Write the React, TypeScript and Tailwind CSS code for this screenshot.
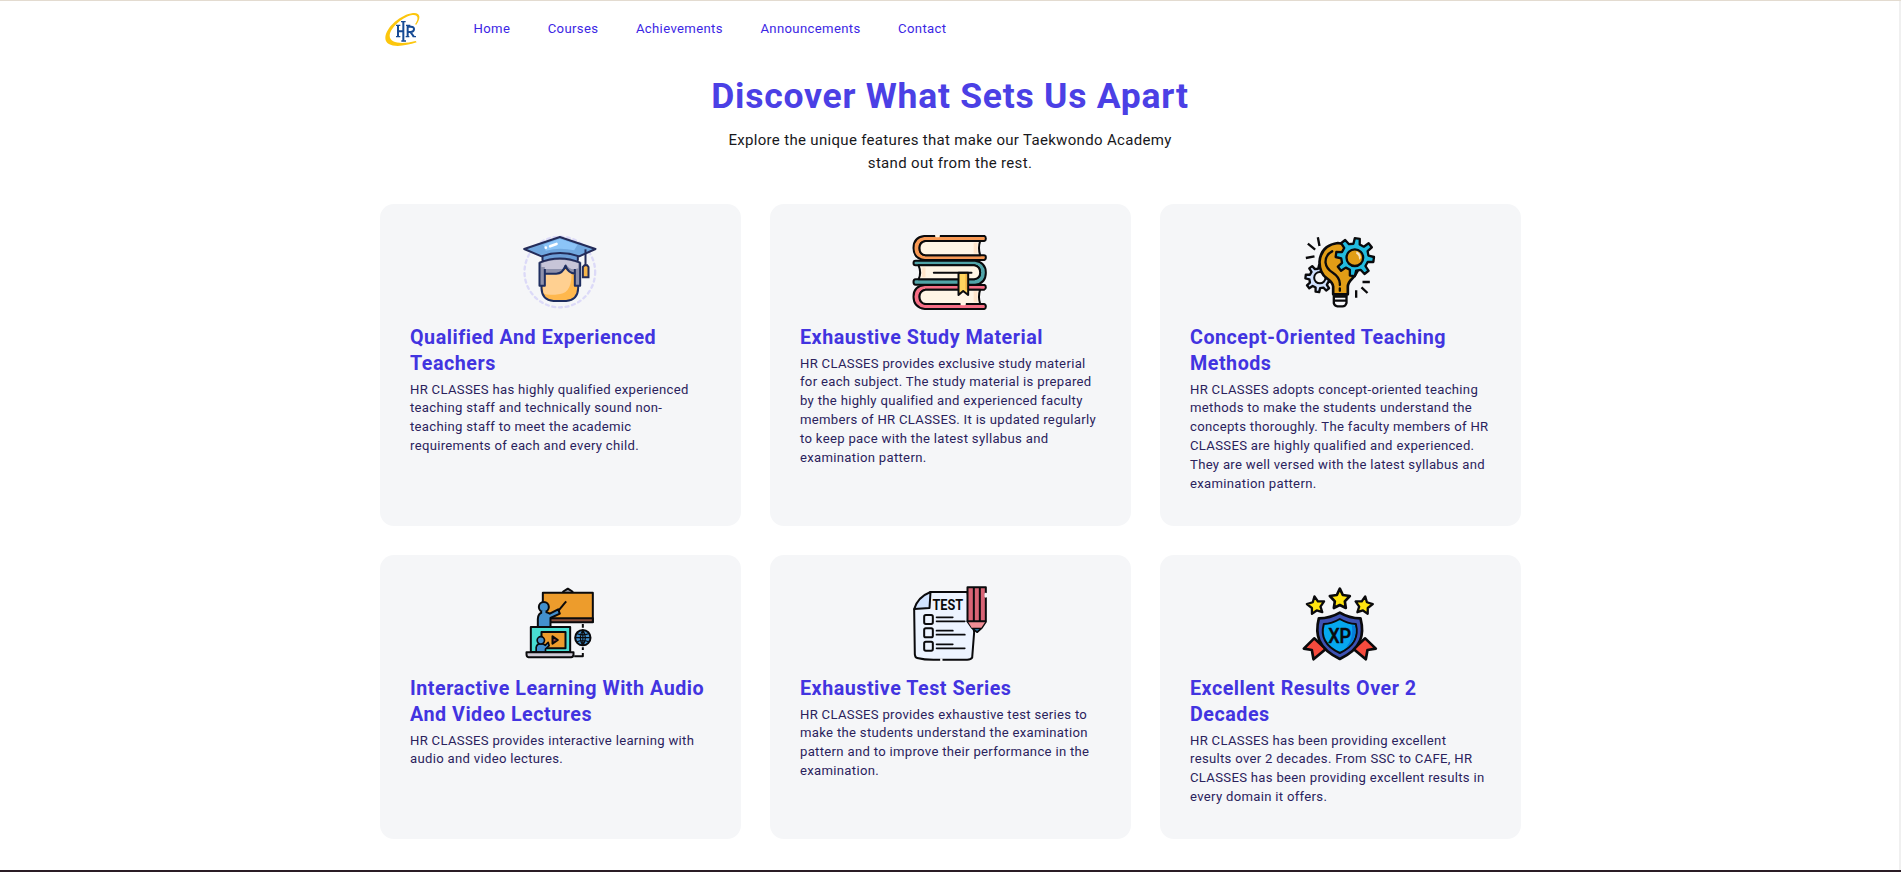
import type { ReactNode } from "react";

const INK = "#0a0a0c";

function Logo() {
  return (
    <svg viewBox="0 0 150 135" className="h-[45px] w-[50px]" fill="none">
      <path d="M115 59C130 38 127 22 105 24C70 28 23 66 22 99C22 129 72 127 116 112L113 108C74 118 35 116 35 92C37 66 78 33 104 30C121 28 123 42 111 58Z" fill="#fcc60d" />
      <g stroke="#164a94" strokeWidth="6">
        <path d="M60 63V95M76 51V107M89 63V95M60 79H76M89 65H99Q109 66 108 73Q107 80 98 81H89M97 81L107 94" />
        <path d="M54 61H67M54 95H67M69 50H83M70 108H84M84 61H97M83 95H94M104 95H114" strokeWidth="4" />
      </g>
    </svg>
  );
}

function Teacher() {
  return (
    <>
      <circle cx="149" cy="141" r="106" stroke="#dcdaf8" strokeWidth="7" strokeDasharray="9 11" strokeLinecap="round" />
      <path d="M94 130V190Q95 225 130 228H168Q203 225 204 190V130Z" fill="#ffb84d" />
      <path d="M99 135V205Q112 213 150 207Q187 203 184 135Z" fill="#ffd091" />
      <path d="M94 175V190Q95 225 130 228H168Q203 225 204 190V175" stroke="#1e2e60" strokeWidth="6" />
      <path d="M88 112Q149 90 210 112V182H195V146Q177 148 166 126Q158 146 139 146H104V182H88Z" fill="#8e91ab" />
      <path d="M94 114Q149 94 204 114V130Q180 140 167 116L157 132H104V126H94Z" fill="#c7c5d8" />
      <path d="M88 112V182H104V132M194 132V182H210V112M104 146H138Q158 146 166 122Q174 145 195 146" stroke="#1e2e60" strokeWidth="6" strokeLinejoin="round" />
      <path d="M97 90V109Q149 90 203 109V90L149 74Z" fill="#6d9ed7" />
      <path d="M88 113Q149 88 210 113M97 90V107M203 90V107" stroke="#242c59" strokeWidth="6" />
      <path d="M42 72L149 36L256 72L207 94Q149 74 94 94Z" fill="#71a8df" stroke="#242c59" strokeWidth="6" strokeLinejoin="round" />
      <path d="M99 59L149 41L202 59L192 76Q149 66 107 77Z" fill="#8cc4f7" />
      <path d="M120 64L139 57" stroke="#fff" strokeWidth="8" strokeLinecap="round" />
      <circle cx="107" cy="68" r="4" fill="#fff" />
      <path d="M226 73V123" stroke="#242c59" strokeWidth="6" />
      <path d="M218 126L223 121H231L235 126V157H218Z" fill="#f6b64b" stroke="#242c59" strokeWidth="6" />
    </>
  );
}

function Books() {
  return (
    <g stroke={INK} strokeWidth="6" strokeLinejoin="round" strokeLinecap="round">
      <path d="M72 33H253Q257 34 257 41Q257 47 252 48H76Q58 51 58 69Q58 89 76 91H252Q257 91 257 97Q257 104 252 105H74Q40 101 40 69Q40 37 72 33Z" fill="#f99a55" />
      <path d="M76 48H240Q233 69 240 91H76Q58 89 58 69Q58 51 76 48Z" fill="#fff5e5" />
      <path d="M74 180H253Q257 181 257 187Q257 193 252 194H76Q58 198 58 215Q58 234 76 237H252Q257 238 257 245Q257 251 252 252H74Q40 247 40 215Q40 183 74 180Z" fill="#f66f86" />
      <path d="M76 194H240Q233 215 240 237H76Q58 234 58 215Q58 198 76 194Z" fill="#fff5e5" />
      <path d="M46 107H225Q257 112 257 143Q257 175 225 179H46Q40 179 40 171Q40 163 46 163H222Q240 159 240 143Q240 124 222 121H46Q40 121 40 114Q40 107 46 107Z" fill="#50a4a8" />
      <path d="M55 121H222Q240 124 240 143Q240 159 222 163H55Q65 143 55 121Z" fill="#fff5e5" />
      <path d="M226 53V86M226 199V232" stroke="#ffe5ca" strokeWidth="11" strokeLinecap="butt" />
      <path d="M71 127V157" stroke="#ffe5ca" strokeWidth="10" strokeLinecap="butt" />
      <path d="M175 143V210L189 198L204 210V143Z" fill="#ffd45f" />
      <path d="M198 147V193" stroke="#efaa3d" strokeWidth="4" />
      <path d="M101 143H214" strokeWidth="6" />
      <path d="M108 33H116M184 237H194" stroke="#fff5e5" strokeWidth="7" />
    </g>
  );
}

function Gear({ cx, cy, scale, fill }: { cx: number; cy: number; scale: number; fill: string }) {
  return (
    <path
      transform={`translate(${cx} ${cy}) scale(${scale}) rotate(7)`}
      d="M-9-39L-7-56H8L10-39L23-34L36-46L47-35L36-22L40-9L57-7V8L40 10L35 23L46 36L35 47L22 36L9 40L7 57H-8L-10 40L-23 35L-36 46L-47 35L-36 22L-40 9L-57 7V-8L-40-10L-35-23L-46-36L-35-47L-22-36Z"
      fill={fill}
      stroke={INK}
      strokeWidth={7 / scale}
      strokeLinejoin="round"
    />
  );
}

function Idea() {
  return (
    <>
      <Gear cx={87} cy={160} scale={0.72} fill="#d0e1ff" />
      <circle cx="89" cy="158" r="17" fill="#f5f6f8" stroke={INK} strokeWidth="6" />
      <path d="M129 208V185Q128 173 111 161Q88 145 88 111Q92 61 143 54Q205 61 207 113Q207 140 185 162Q173 173 173 186V208Z" fill="#e29d16" stroke={INK} strokeWidth="8" strokeLinejoin="round" />
      <path d="M126 79Q106 89 106 112Q108 131 128 143Q151 158 149 180M149 190V197" stroke={INK} strokeWidth="7" strokeLinecap="round" />
      <path d="M131 214H169V234Q166 244 157 244H142Q133 243 131 235Z" fill="#f8f8fb" stroke={INK} strokeWidth="7" />
      <path d="M129 214H171M131 227H169" stroke={INK} strokeWidth="7" />
      <Gear cx={194} cy={96} scale={1} fill="#22bcdf" />
      <circle cx="194" cy="98" r="25" fill="#e29d16" stroke={INK} strokeWidth="7" />
      <path d="M199 79Q212 84 212 99L207 105Q208 91 198 86Z" fill="#f7e3c2" />
      <path d="M83 37L88 63M53 56L75 74M47 99L73 94M217 171H239M214 187L232 204M198 196V218" stroke={INK} strokeWidth="7" />
    </>
  );
}

function Lecture() {
  return (
    <g stroke={INK} strokeWidth="6" strokeLinejoin="round">
      <path d="M157 42L173 32L189 42" fill="#9a9aa2" />
      <path d="M98 44H248V132H98Z" fill="#ed9c2c" />
      <path d="M98 121H248V133H98Z" fill="#8d513c" />
      <path d="M83 147V123Q84 106 97 103L103 101Q113 104 119 107L144 94L149 107L121 120V147Z" fill="#4390cd" />
      <circle cx="101" cy="87" r="15" fill="#4390cd" />
      <path d="M96 99H106V112H96Z" fill="#4390cd" stroke="none" />
      <path d="M145 98L168 70" />
      <path d="M62 147H180V222H62Z" fill="#48ddd1" strokeWidth="6" />
      <path d="M94 162H166V211H94Z" fill="#ed9c2c" />
      <path d="M78 222V208Q80 197 93 197Q102 198 105 202L114 193L117 203L106 213V222Z" fill="#4390cd" strokeWidth="5" />
      <circle cx="92" cy="187" r="11" fill="#4390cd" strokeWidth="5" />
      <path d="M127 175L143 186L127 197Z" fill="#a4473c" />
      <path d="M49 223H190V230Q189 238 183 238H55Q49 237 49 229Z" fill="#cecad5" />
      <circle cx="218" cy="179" r="23" fill="#4390cd" />
      <path d="M218 156Q203 179 218 202Q233 179 218 156V202M195 179H241M201 167Q218 174 235 167M201 191Q218 184 235 191" strokeWidth="3.5" />
      <path d="M218 138V149M218 208V216M218 225V235H192" />
    </g>
  );
}

function Test() {
  return (
    <g stroke={INK} strokeWidth="6" strokeLinecap="round" strokeLinejoin="round">
      <path d="M91 42H202L222 162L216 239Q212 245 201 245H116Q78 247 51 240Q45 239 44 229L42 94Z" fill="#edf4ff" />
      <path d="M120 245H127" stroke="#f5f6f8" strokeWidth="8" strokeLinecap="butt" />
      <path d="M42 93Q53 57 91 42L88 90Z" fill="#d1e3ff" />
      <rect x="72" y="111" width="26" height="27" rx="5" />
      <rect x="72" y="151" width="26" height="27" rx="5" />
      <rect x="72" y="191" width="26" height="27" rx="5" />
      <path d="M109 118H158M109 130H194M109 158H158M109 170H194M109 199H158M109 211H194" strokeWidth="5" />
      <path d="M202 28H257V131L245 149L231 162L215 149L202 130Z" fill="#d86475" />
      <path d="M204 132H255L243 150H215Z" fill="#f18d94" stroke="none" />
      <path d="M202 130H255M221 30V129M239 30V129" />
      <path d="M217 151H243L231 162Z" fill="#276a92" strokeWidth="4" />
      <path d="M257 48V55" stroke="#f5f6f8" strokeWidth="8" />
      <text x="97" y="96" textLength="92" lengthAdjust="spacingAndGlyphs" fill={INK} stroke="none" fontFamily="Roboto, sans-serif" fontWeight="700" fontSize="45">TEST</text>
    </g>
  );
}

const STAR = "M0-30L9-11L30-8L15 8L18 28L0 19L-18 28L-15 8L-30-8L-9-11Z";

function Results() {
  return (
    <g stroke={INK} strokeWidth="8" strokeLinejoin="round">
      <path d="M72 181L41 212L65 216L70 244L107 213Z" fill="#f64b3d" />
      <path d="M225 181L257 212L232 216L227 244L190 213Z" fill="#f64b3d" />
      <path d="M149 104Q177 121 211 121C223 168 216 211 149 243C82 211 74 168 86 121Q120 121 149 104Z" fill="#3d52b3" />
      <path d="M149 123Q173 137 197 138C205 170 197 203 149 225C101 203 92 170 101 138Q125 137 149 123Z" fill="#06a8ef" strokeWidth="6" />
      <path d="M185 141L194 143C200 169 191 195 166 211Q192 181 185 141Z" fill="#087cdb" stroke="none" />
      <path d={STAR} transform="translate(149 62)" fill="#ffe410" />
      <path d={STAR} transform="translate(77 81) rotate(-9) scale(.87)" fill="#ffe410" />
      <path d={STAR} transform="translate(221 81) rotate(9) scale(.87)" fill="#ffe410" />
      <text x="114" y="194" textLength="69" lengthAdjust="spacingAndGlyphs" fill={INK} stroke={INK} strokeWidth="1.5" fontFamily="Roboto, sans-serif" fontWeight="500" fontSize="59">XP</text>
    </g>
  );
}

type Feature = { icon: ReactNode; box: string; title: string[]; body: string[] };

const TOP = "38.5 27 225 225";
const BOTTOM = "38.5 21 225 225";

const features: Feature[] = [
  { icon: <Teacher />, box: TOP, title: ["Qualified And Experienced", "Teachers"], body: ["HR CLASSES has highly qualified experienced", "teaching staff and technically sound non-", "teaching staff to meet the academic", "requirements of each and every child."] },
  { icon: <Books />, box: TOP, title: ["Exhaustive Study Material"], body: ["HR CLASSES provides exclusive study material", "for each subject. The study material is prepared", "by the highly qualified and experienced faculty", "members of HR CLASSES. It is updated regularly", "to keep pace with the latest syllabus and", "examination pattern."] },
  { icon: <Idea />, box: TOP, title: ["Concept-Oriented Teaching", "Methods"], body: ["HR CLASSES adopts concept-oriented teaching", "methods to make the students understand the", "concepts thoroughly. The faculty members of HR", "CLASSES are highly qualified and experienced.", "They are well versed with the latest syllabus and", "examination pattern."] },
  { icon: <Lecture />, box: BOTTOM, title: ["Interactive Learning With Audio", "And Video Lectures"], body: ["HR CLASSES provides interactive learning with", "audio and video lectures."] },
  { icon: <Test />, box: BOTTOM, title: ["Exhaustive Test Series"], body: ["HR CLASSES provides exhaustive test series to", "make the students understand the examination", "pattern and to improve their performance in the", "examination."] },
  { icon: <Results />, box: BOTTOM, title: ["Excellent Results Over 2", "Decades"], body: ["HR CLASSES has been providing excellent", "results over 2 decades. From SSC to CAFE, HR", "CLASSES has been providing excellent results in", "every domain it offers."] },
];

function Card({ icon, box, title, body }: Feature) {
  return (
    <article className="rounded-[14px] bg-[#f5f6f8] px-[30.5px] pt-[30px]">
      <svg viewBox={box} className="mx-auto mb-[16px] block h-[75px] w-[75px] overflow-visible" fill="none">{icon}</svg>
      <h2 className="text-[19.7px] leading-[26px] font-bold tracking-[0.52px] text-[#4234e0]">
        {title.map((line) => <span key={line} className="block w-fit whitespace-nowrap">{line}</span>)}
      </h2>
      <p className="mt-[4px] text-[13.125px] leading-[18.9px] tracking-[0.31px] text-[#2a225c]">
        {body.map((line) => <span key={line} className="block w-fit whitespace-nowrap">{line}</span>)}
      </p>
    </article>
  );
}

export default function App() {
  return (
    <div className="flex h-[872px] flex-col overflow-hidden border-t border-b-2 border-t-[#e3dbd0] border-b-[#2a1c25] bg-white font-['Roboto',sans-serif]">
      <div className="grow border-r-2 border-[#f0f0f0]">
        <div className="ml-[379.5px] w-[1141px]">
          <header className="flex h-[55px] items-center">
            <div className="-mt-[3px] -ml-[2px] mr-[46px]"><Logo /></div>
            <nav className="flex gap-[37.5px] text-[13.125px] tracking-[0.36px] text-[#3b25e4]">
              <a>Home</a><a>Courses</a><a>Achievements</a><a>Announcements</a><a>Contact</a>
            </nav>
          </header>
          <div className="pt-[21px] text-center">
            <h1 className="text-[35.5px] leading-[38px] font-bold tracking-[0.75px] text-[#4b40e5]">Discover What Sets Us Apart</h1>
            <p className="mt-[14px] text-[15px] leading-[22.75px] tracking-[0.32px] text-[#18181b]">
              Explore the unique features that make our Taekwondo Academy<br />stand out from the rest.
            </p>
          </div>
          <main className="mt-[29px] grid grid-cols-[361px_361px_361px] grid-rows-[322px_284px] gap-x-[29px] gap-y-[29px]">
            {features.map((feature) => <Card key={feature.title[0]} {...feature} />)}
          </main>
        </div>
      </div>
    </div>
  );
}
